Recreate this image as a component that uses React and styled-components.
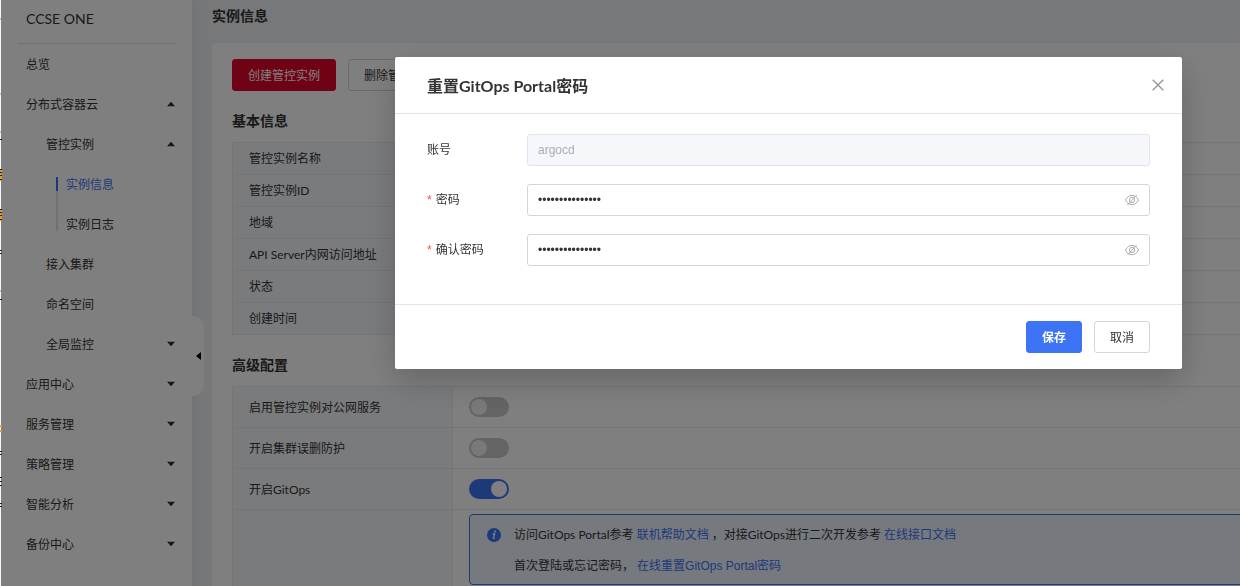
import React from "react";
import styled, { createGlobalStyle, css } from "styled-components";

const sans = `Lato, "Noto Sans CJK SC", sans-serif`;
const arial = `"Liberation Sans", "Noto Sans CJK SC", sans-serif`;

const menu = [
  { label: "总览", level: 0 },
  { label: "分布式容器云", level: 0, arrow: "up" },
  { label: "管控实例", level: 1, arrow: "up" },
  { label: "实例信息", level: 2, active: true },
  { label: "实例日志", level: 2 },
  { label: "接入集群", level: 1 },
  { label: "命名空间", level: 1 },
  { label: "全局监控", level: 1, arrow: "down" },
  { label: "应用中心", level: 0, arrow: "down" },
  { label: "服务管理", level: 0, arrow: "down" },
  { label: "策略管理", level: 0, arrow: "down" },
  { label: "智能分析", level: 0, arrow: "down" },
  { label: "备份中心", level: 0, arrow: "down" },
];

const basicInfo = [
  "管控实例名称",
  "管控实例ID",
  "地域",
  "API Server内网访问地址",
  "状态",
  "创建时间",
];

const switches = [
  { id: "public", label: "启用管控实例对公网服务", on: false },
  { id: "protect", label: "开启集群误删防护", on: false },
  { id: "gitops", label: "开启GitOps", on: true },
];

function Caret({ up }) {
  return (
    <svg width="8" height="6" viewBox="0 0 8 6" aria-hidden="true">
      <path d={up ? "M0 5.2L4 0.8l4 4.4z" : "M0 0.8h8L4 5.2z"} fill="#303133" />
    </svg>
  );
}

function EyeOff() {
  return (
    <svg
      width="14"
      height="14"
      viewBox="0 0 14 14"
      fill="none"
      stroke="#a8abb2"
      aria-hidden="true"
    >
      <path d="M0.5 7C2 4 4.2 2.4 7 2.4S12 4 13.5 7C12 10 9.8 11.6 7 11.6S2 10 0.5 7z" />
      <circle cx="7" cy="7" r="2.6" />
      <path d="M11.8 2L2.4 12" />
    </svg>
  );
}

function EdgeMarks() {
  return (
    <Edge width="2" height="586" viewBox="0 0 2 586" aria-hidden="true">
      <path d="M0 19h1M0 132h1M0 291h1" stroke="#5b9bd5" />
      <path d="M0 94h1" stroke="#7fe3f0" strokeWidth="2" />
      <path
        d="M1 169v12M1 209v12M1 425v2M1 430v2"
        stroke="#e09a30"
        strokeWidth="2"
      />
      <path
        d="M0 139.5h2M0 169.5h2M0 172.5h2M0 175.5h2M0 179.5h2M0 209.5h2M0 212.5h2M0 215.5h2M0 219.5h2M0 250.5h2M0 253.5h2M0 299.5h2M0 451.5h2M0 454.5h2M0 477.5h2M0 481.5h2M0 485.5h2M0 503.5h2M0 506.5h2"
        stroke="#222"
      />
    </Edge>
  );
}

function PasswordField({ id, label }) {
  return (
    <FormItem>
      <Label htmlFor={id}>
        <Required>*</Required>
        {label}
      </Label>
      <InputBox>
        <Input id={id} type="password" defaultValue="argocd-password" />
        <EyeButton type="button" aria-label="显示密码">
          <EyeOff />
        </EyeButton>
      </InputBox>
    </FormItem>
  );
}

function App() {
  return (
    <>
      <GlobalStyle />
      <Page>
        <Sidebar>
          <Brand>CCSE ONE</Brand>
          <nav>
            {menu.map((item) => (
              <MenuItem
                key={item.label}
                href="#"
                $level={item.level}
                $active={item.active}
              >
                {item.level === 2 && <Rail $active={item.active} />}
                <span>{item.label}</span>
                {item.arrow && <Caret up={item.arrow === "up"} />}
              </MenuItem>
            ))}
          </nav>
          <Collapse type="button" aria-label="收起">
            <svg width="5" height="8" viewBox="0 0 5 8" aria-hidden="true">
              <path d="M5 0v8L0 4z" fill="#000" />
            </svg>
          </Collapse>
        </Sidebar>

        <Main>
          <PageTitle>实例信息</PageTitle>
          <Card>
            <Toolbar>
              <Button $kind="danger">创建管控实例</Button>
              <Button>删除管控实例</Button>
            </Toolbar>

            <SectionTitle>基本信息</SectionTitle>
            <Table>
              <tbody>
                {basicInfo.map((label) => (
                  <Row key={label} $height={32}>
                    <th scope="row">{label}</th>
                    <td />
                  </Row>
                ))}
              </tbody>
            </Table>

            <SectionTitle>高级配置</SectionTitle>
            <Table>
              <tbody>
                {switches.map((item) => (
                  <Row key={item.id} $height={41}>
                    <th scope="row">
                      <SwitchLabel htmlFor={item.id}>{item.label}</SwitchLabel>
                    </th>
                    <td>
                      <Switch
                        id={item.id}
                        type="checkbox"
                        defaultChecked={item.on}
                      />
                    </td>
                  </Row>
                ))}
                <Row $height={80}>
                  <th />
                  <td>
                    <Alert>
                      <svg width="14" height="14" viewBox="0 0 14 14" aria-hidden="true">
                        <circle cx="7" cy="7" r="7" fill="#3d73f5" />
                        <circle cx="8" cy="3.6" r="1" fill="#fff" />
                        <path
                          d="M5.6 6h2L6.4 10.4h1.4"
                          fill="none"
                          stroke="#fff"
                          strokeWidth="1.3"
                        />
                      </svg>
                      <div>
                        <p>
                          访问GitOps Portal参考 <a href="#">联机帮助文档</a>{" "}
                          ，对接GitOps进行二次开发参考 <a href="#">在线接口文档</a>
                        </p>
                        <p>
                          首次登陆或忘记密码，{" "}
                          <ResetLink href="#">在线重置GitOps Portal密码</ResetLink>
                        </p>
                      </div>
                    </Alert>
                  </td>
                </Row>
              </tbody>
            </Table>
          </Card>
        </Main>
      </Page>

      <Overlay>
        <Dialog role="dialog" aria-labelledby="dialog-title">
          <DialogHeader>
            <h2 id="dialog-title">重置GitOps Portal密码</h2>
            <CloseButton type="button" aria-label="关闭">
              <svg width="12" height="12" viewBox="0 0 12 12" aria-hidden="true">
                <path
                  d="M0.7 0.7l10.6 10.6M11.3 0.7L0.7 11.3"
                  stroke="#909399"
                  strokeWidth="1.3"
                />
              </svg>
            </CloseButton>
          </DialogHeader>
          <DialogBody>
            <FormItem>
              <Label htmlFor="account">账号</Label>
              <InputBox>
                <Input id="account" type="text" defaultValue="argocd" disabled />
              </InputBox>
            </FormItem>
            <PasswordField id="password" label="密码" />
            <PasswordField id="confirm" label="确认密码" />
          </DialogBody>
          <DialogFooter>
            <Button $kind="primary">保存</Button>
            <Button>取消</Button>
          </DialogFooter>
        </Dialog>
      </Overlay>
      <EdgeMarks />
    </>
  );
}

const GlobalStyle = createGlobalStyle`
  *, *::before, *::after {
    box-sizing: border-box;
  }

  body {
    margin: 0;
    background: #fff;
    color: #333;
    font-family: ${sans};
    font-size: 12px;
    line-height: 20px;
    overflow: hidden;
  }

  h1, h2, p {
    margin: 0;
  }

  a {
    color: #3d73f5;
    text-decoration: none;
  }

  button, input {
    font-family: inherit;
    font-size: 12px;
  }
`;

const Page = styled.div`
  display: flex;
  min-height: 100vh;
  padding-left: 1px;
`;

const Edge = styled.svg`
  position: fixed;
  left: 0;
  top: 0;
  z-index: 11;
`;

const Sidebar = styled.aside`
  flex: none;
  width: 191px;
  background: #fff;
  box-shadow: 0 0 12px rgba(0, 0, 0, 0.08);
  position: relative;
  z-index: 1;
`;

const Brand = styled.div`
  height: 44px;
  margin: 0 16px 0 17px;
  padding: 9px 8px 0;
  border-bottom: 1px solid #dcdfe6;
  font-size: 14px;
`;

const MenuItem = styled.a`
  display: flex;
  align-items: center;
  justify-content: space-between;
  height: 40px;
  padding: 0 17px 0 ${(props) => 25 + props.$level * 20}px;
  color: ${(props) => (props.$active ? "#3d73f5" : "#333")};
  position: relative;

  span {
    padding-top: 2px;
  }
`;

const Rail = styled.i`
  position: absolute;
  left: 55px;
  top: ${(props) => (props.$active ? 13 : 0)}px;
  width: 2px;
  height: 27px;
  background: #e0e2ee;

  ${(props) =>
    props.$active &&
    css`
      background: linear-gradient(#3d73f5 14px, #e0e2ee 14px);
    `}
`;

const Collapse = styled.button`
  display: flex;
  align-items: center;
  justify-content: center;
  width: 12px;
  height: 80px;
  padding: 0;
  border: 0;
  border-radius: 0 12px 12px 0;
  background: #fff;
  position: absolute;
  left: 100%;
  top: 316px;
`;

const Main = styled.main`
  flex: 1;
  min-width: 0;
  padding-left: 20px;
  background: #eef0f4;
`;

const PageTitle = styled.h1`
  height: 43px;
  padding-top: 6px;
  font-size: 14px;
  line-height: 20px;
`;

const Card = styled.section`
  margin-right: -40px;
  padding: 16px 20px;
  border-radius: 4px;
  background: #fff;
`;

const Toolbar = styled.div`
  display: flex;
  gap: 12px;
`;

const buttonKinds = {
  danger: css`
    background: #df0428;
    border-color: #df0428;
    color: #fff;
  `,
  primary: css`
    background: #3d73f5;
    border-color: #3d73f5;
    color: #fff;
    font-weight: 700;
  `,
};

const Button = styled.button.attrs({ type: "button" })`
  height: 32px;
  padding: 0 15px 2px;
  border: 1px solid #d4d6d9;
  border-radius: 3px;
  background: #fff;
  color: #333;

  ${(props) => buttonKinds[props.$kind]}
`;

const SectionTitle = styled.h2`
  padding: 20px 0 11px;
  font-size: 14px;
  line-height: 20px;
`;

const Table = styled.table`
  width: 100%;
  table-layout: fixed;
  border-collapse: collapse;

  th,
  td {
    padding: 0 16px;
    border: 1px solid #e8eaf2;
    text-align: left;
    font-weight: 400;
  }

  th {
    width: 220px;
    background: #f5f7fa;
  }
`;

const Row = styled.tr`
  height: ${(props) => props.$height}px;
`;

const SwitchLabel = styled.label`
  display: block;
  padding-top: 2px;
`;

const Switch = styled.input`
  display: block;
  appearance: none;
  width: 40px;
  height: 20px;
  margin: 0;
  padding: 2px;
  border-radius: 10px;
  background: #c8c8c8;

  &::before {
    content: "";
    display: block;
    width: 16px;
    height: 16px;
    border-radius: 50%;
    background: #f2f2f2;
  }

  &:checked {
    background: #3d73f5;
  }

  &:checked::before {
    margin-left: 20px;
    background: #fff;
  }
`;

const Alert = styled.div`
  display: flex;
  gap: 13px;
  margin: 4px 0;
  padding: 10px 17px 8px;
  border: 1px solid #3d73f5;
  border-radius: 4px;
  background: #ecf2fc;

  svg {
    flex: none;
    margin-top: 3px;
  }

  p {
    height: 20px;
  }

  p + p {
    margin-top: 11px;
  }
`;

const ResetLink = styled.a`
  font-family: ${arial};
`;

const Overlay = styled.div`
  display: flex;
  align-items: flex-start;
  padding: 57px 58px 40px 394px;
  background: rgba(0, 0, 0, 0.5);
  position: fixed;
  inset: 0 0 0 1px;
  z-index: 10;
`;

const Dialog = styled.div`
  flex: 1;
  border-radius: 2px;
  background: #fff;
  box-shadow: 0 12px 32px rgba(0, 0, 0, 0.2);
`;

const DialogHeader = styled.header`
  display: flex;
  align-items: center;
  justify-content: space-between;
  height: 57px;
  padding: 0 18px 0 32px;
  border-bottom: 1px solid #e1e4f0;

  h2 {
    padding-top: 2px;
    font-size: 16px;
    line-height: 24px;
  }
`;

const CloseButton = styled.button`
  display: flex;
  padding: 0;
  border: 0;
  background: none;
`;

const DialogBody = styled.div`
  padding: 20px 32px;
`;

const FormItem = styled.div`
  display: flex;
  height: 32px;
  margin-bottom: 18px;
`;

const Label = styled.label`
  flex: none;
  width: 100px;
  line-height: 32px;
`;

const Required = styled.span`
  margin-right: 4px;
  color: #f84f4f;
  font-family: ${arial};
`;

const InputBox = styled.div`
  flex: 1;
  position: relative;
`;

const Input = styled.input`
  display: block;
  width: 100%;
  height: 32px;
  padding: 0 32px 0 10px;
  border: 1px solid #d4d6d9;
  border-radius: 3px;
  background: #fff;
  color: #333;
  font-family: ${arial};

  &:disabled {
    border-color: #e1e4f0;
    background: #f5f7fa;
    color: #a8abb2;
  }
`;

const EyeButton = styled.button`
  display: flex;
  padding: 0;
  border: 0;
  background: none;
  position: absolute;
  right: 11px;
  top: 9px;
`;

const DialogFooter = styled.footer`
  display: flex;
  justify-content: flex-end;
  gap: 12px;
  padding: 16px 32px;
  border-top: 1px solid #e1e4f0;
`;

export default App;
